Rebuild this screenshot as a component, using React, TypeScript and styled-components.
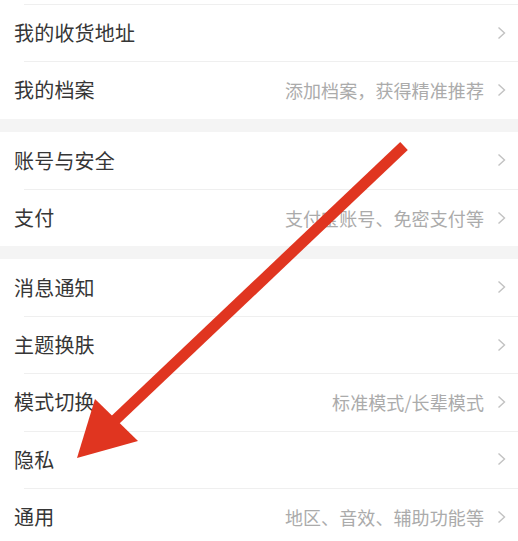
import React from "react";
import styled, { createGlobalStyle } from "styled-components";

const Global = createGlobalStyle`
  html, body {
    margin: 0;
    padding: 0;
    height: 100%;
    overflow: hidden;
    background: #ffffff;
  }
  body {
    font-family: "Noto Sans CJK SC", "Noto Sans", sans-serif;
    -webkit-font-smoothing: antialiased;
  }
`;

const Page = styled.div`
  position: relative;
  width: 518px;
  height: 541px;
  overflow: hidden;
  background: #ffffff;
  display: flex;
  flex-direction: column;
`;

const Section = styled.div`
  background: #ffffff;
  display: flex;
  flex-direction: column;
`;

const Band = styled.div<{ $h: number }>`
  height: ${(p) => p.$h}px;
  background: #f4f4f4;
  flex-shrink: 0;
`;

const TopStrip = styled.div`
  height: 4px;
  flex-shrink: 0;
`;

const Row = styled.div<{ $divider: boolean }>`
  position: relative;
  height: 57.3px;
  flex-shrink: 0;
  display: flex;
  align-items: center;
  padding: 0 12px 0 14px;
  &::before {
    content: "";
    display: ${(p) => (p.$divider ? "block" : "none")};
    position: absolute;
    left: 24px;
    right: 0;
    top: 0;
    height: 1px;
    background: #efefef;
  }
`;

const Label = styled.span`
  font-size: 20px;
  color: #363636;
  letter-spacing: 0.2px;
  white-space: nowrap;
`;

const Hint = styled.span`
  margin-left: auto;
  font-size: 18px;
  color: #ababab;
  white-space: nowrap;
  letter-spacing: 0.1px;
`;

const Chevron = styled.svg`
  flex-shrink: 0;
  width: 9px;
  height: 14px;
  margin-left: 13px;
`;

const Spacer = styled.span`
  margin-left: auto;
`;

const Overlay = styled.svg`
  position: absolute;
  left: 0;
  top: 0;
  width: 518px;
  height: 541px;
  pointer-events: none;
`;

type Item = { label: string; hint?: string };

const sections: Item[][] = [
  [{ label: "我的收货地址" }, { label: "我的档案", hint: "添加档案，获得精准推荐" }],
  [{ label: "账号与安全" }, { label: "支付", hint: "支付宝账号、免密支付等" }],
  [
    { label: "消息通知" },
    { label: "主题换肤" },
    { label: "模式切换", hint: "标准模式/长辈模式" },
    { label: "隐私" },
    { label: "通用", hint: "地区、音效、辅助功能等" },
  ],
];

const ChevronIcon = () => (
  <Chevron viewBox="0 0 9 14">
    <path d="M1.5 1.5 L7.5 7 L1.5 12.5" fill="none" stroke="#c2c2c2" strokeWidth="1.4" />
  </Chevron>
);

const SettingRow = ({ item, divider }: { item: Item; divider: boolean }) => (
  <Row $divider={divider}>
    <Label>{item.label}</Label>
    {item.hint ? <Hint>{item.hint}</Hint> : <Spacer />}
    <ChevronIcon />
  </Row>
);

export default function App() {
  return (
    <>
      <Global />
      <Page>
        <Section>
          <TopStrip />
          {sections[0].map((it) => (
            <SettingRow key={it.label} item={it} divider={true} />
          ))}
        </Section>
        <Band $h={13} />
        <Section>
          {sections[1].map((it, i) => (
            <SettingRow key={it.label} item={it} divider={i > 0} />
          ))}
        </Section>
        <Band $h={12.5} />
        <Section>
          {sections[2].map((it, i) => (
            <SettingRow key={it.label} item={it} divider={i > 0} />
          ))}
        </Section>
        <Overlay viewBox="0 0 518 541">
          <line x1="404" y1="146" x2="112" y2="423" stroke="#e03520" strokeWidth="11" />
          <polygon points="77,458 95,399 138,441" fill="#e03520" />
        </Overlay>
      </Page>
    </>
  );
}
